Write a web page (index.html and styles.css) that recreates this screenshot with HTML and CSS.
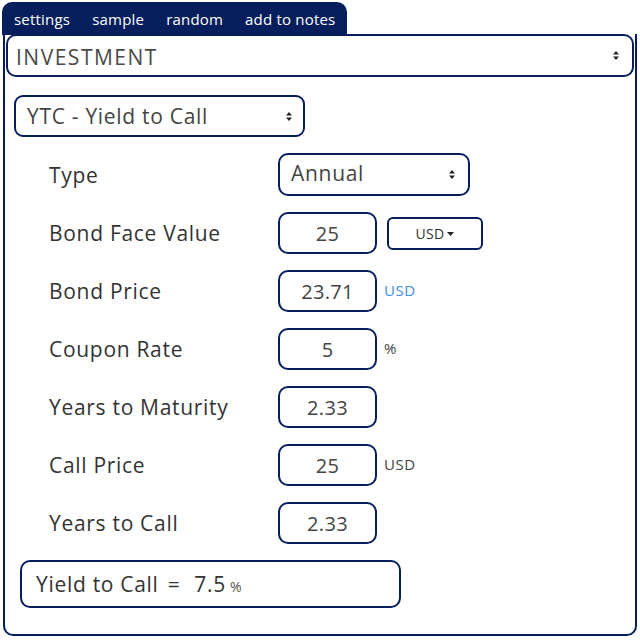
FILE: index.html
```html
<!DOCTYPE html>
<html>
<head>
<meta charset="utf-8">
<link rel="stylesheet" href="styles.css">
</head>
<body>
<div class="wrap">
  <div class="tabs">
    <span>settings</span>
    <span>sample</span>
    <span>random</span>
    <span>add to notes</span>
  </div>
  <div class="panel">
    <div class="sel sel-main"><span class="caps">INVESTMENT</span><svg class="arr" width="8" height="11" viewBox="0 0 8 11"><path d="M4 1 L7 4.5 H1 Z M4 10 L7 6.5 H1 Z" fill="#222"/></svg></div>
    <div class="sel sel-calc"><span>YTC - Yield to Call</span><svg class="arr" width="8" height="11" viewBox="0 0 8 11"><path d="M4 1 L7 4.5 H1 Z M4 10 L7 6.5 H1 Z" fill="#222"/></svg></div>
    <div class="rows">
      <div class="row">
        <div class="lbl">Type</div>
        <div class="sel sel-type"><span>Annual</span><svg class="arr" width="8" height="11" viewBox="0 0 8 11"><path d="M4 1 L7 4.5 H1 Z M4 10 L7 6.5 H1 Z" fill="#222"/></svg></div>
      </div>
      <div class="row">
        <div class="lbl">Bond Face Value</div>
        <div class="inp">25</div>
        <div class="ddbtn">USD<svg width="7" height="4" viewBox="0 0 7 4"><path d="M0 0 H7 L3.5 4 Z" fill="#222"/></svg></div>
      </div>
      <div class="row">
        <div class="lbl">Bond Price</div>
        <div class="inp">23.71</div>
        <div class="unit blue">USD</div>
      </div>
      <div class="row">
        <div class="lbl">Coupon Rate</div>
        <div class="inp">5</div>
        <div class="unit">%</div>
      </div>
      <div class="row">
        <div class="lbl">Years to Maturity</div>
        <div class="inp">2.33</div>
      </div>
      <div class="row">
        <div class="lbl">Call Price</div>
        <div class="inp">25</div>
        <div class="unit">USD</div>
      </div>
      <div class="row">
        <div class="lbl">Years to Call</div>
        <div class="inp">2.33</div>
      </div>
    </div>
    <div class="result"><span>Yield to Call</span><span class="eq">=</span><span>7.5</span><span class="pct">%</span></div>
  </div>
</div>
</body>
</html>
```
FILE: styles.css
```css
* { box-sizing: border-box; }
body {
  margin: 0;
  background: #fff;
  font-family: "Open Sans", "Liberation Sans", sans-serif;
  color: #333;
}
.wrap {
  padding: 2px 3px 0 2px;
  width: 640px;
}
.tabs {
  display: inline-flex;
  align-items: center;
  gap: 22px;
  height: 33px;
  padding: 0 12px;
  background: #061f5c;
  color: #fff;
  font-size: 15px;
  letter-spacing: 0.2px;
  border-radius: 10px 10px 0 0;
}
.panel {
  margin-left: 1px;
  height: 602px;
  border: 2px solid #061f5c;
  border-top: none;
  border-radius: 0 0 10px 10px;
  padding: 0 1px;
}
.sel {
  display: flex;
  align-items: center;
  justify-content: space-between;
  border: 2px solid #061f5c;
  border-radius: 10px;
  color: #444;
  font-size: 21px;
  letter-spacing: 0.7px;
}
.caps { letter-spacing: 1.5px; font-weight: 400; color: #4a4a4a; }
.sel-main {
  height: 43px;
  padding: 0 12px 0 8px;
  margin-top: -1px;
}
.sel-main span { margin-top: 2px; }
.sel-calc {
  width: 291px;
  height: 42px;
  margin: 18px 0 0 8px;
  padding: 0 10px 0 11px;
  border-radius: 9px;
}
.rows {
  display: flex;
  flex-direction: column;
  gap: 16px;
  margin-top: 17px;
}
.row {
  display: flex;
  align-items: center;
  height: 42px;
}
.lbl {
  width: 272px;
  padding-left: 43px;
  font-size: 21px;
  letter-spacing: 0.7px;
  color: #333;
}
.sel-type {
  width: 192px;
  height: 43px;
  padding: 0 12px 0 11px;
  margin-top: -2px;
}
.sel-type span { margin-top: -3px; }
.inp {
  width: 99px;
  height: 42px;
  border: 2px solid #061f5c;
  border-radius: 10px;
  display: flex;
  align-items: center;
  justify-content: center;
  font-size: 20px;
  color: #444;
  letter-spacing: 0.3px;
}
.ddbtn {
  margin-left: 10px;
  width: 96px;
  height: 33px;
  border: 2px solid #061f5c;
  border-radius: 6px;
  display: flex;
  align-items: center;
  justify-content: center;
  gap: 3px;
  font-size: 14px;
  letter-spacing: 0.3px;
  color: #333;
  padding-top: 1px;
}
.unit {
  margin-left: 7px;
  margin-top: -3px;
  font-size: 15px;
  letter-spacing: 0.5px;
  color: #444;
}
.unit.blue { color: #3d8fe0; }
.result {
  margin: 16px 0 0 14px;
  width: 381px;
  height: 48px;
  border: 2px solid #061f5c;
  border-radius: 10px;
  display: flex;
  align-items: center;
  padding: 0 0 0 14px;
  font-size: 21px;
  letter-spacing: 0.7px;
  color: #333;
}
.eq { margin: 0 14px 0 9px; }
.pct {
  font-size: 14px;
  color: #555;
  margin-left: 4px;
  margin-top: 4px;
}
```
